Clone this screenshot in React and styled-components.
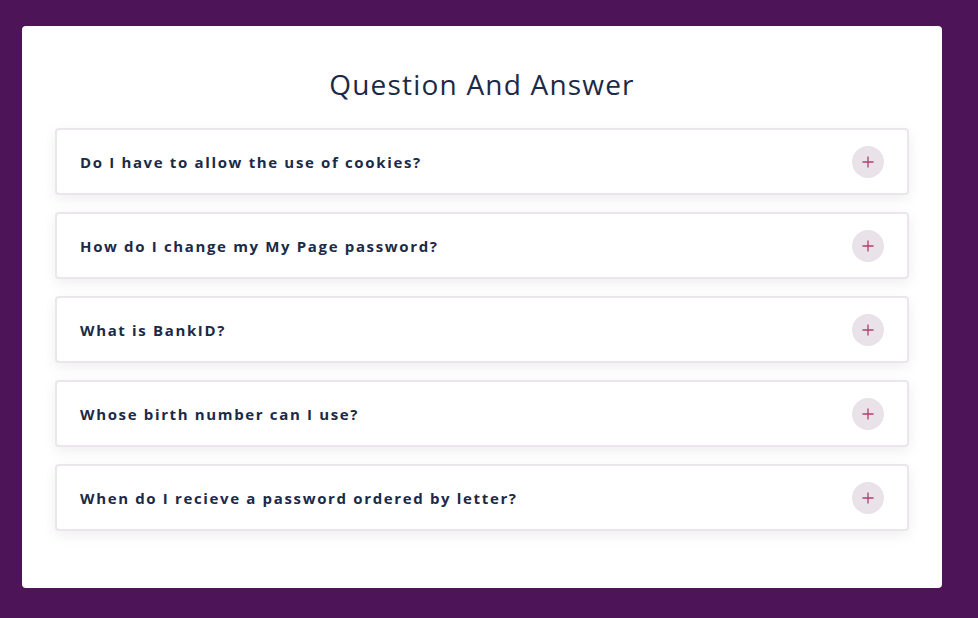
import React, { useState } from 'react';
import styled, { createGlobalStyle } from 'styled-components';

const GlobalStyle = createGlobalStyle`
  body {
    margin: 0;
    background: #4d1558;
    font-family: 'Open Sans', 'Liberation Sans', sans-serif;
  }
`;

const Page = styled.div`
  padding: 26px 36px 30px 22px;
`;

const Card = styled.div`
  background: #fff;
  border-radius: 4px;
  padding: 38px 33px 57px;
  display: flex;
  flex-direction: column;
`;

const Title = styled.h1`
  margin: 0 0 24px;
  text-align: center;
  font-size: 28px;
  line-height: 40px;
  font-weight: 500;
  letter-spacing: 1.2px;
  color: #1b2a47;
`;

const List = styled.div`
  display: flex;
  flex-direction: column;
  gap: 17px;
`;

const Item = styled.div`
  border: 2px solid #ebe6ec;
  border-radius: 4px;
  box-shadow: 0 4px 14px rgba(0, 0, 0, 0.07);
  background: #fff;
`;

const Head = styled.div`
  display: flex;
  align-items: center;
  justify-content: space-between;
  height: 63px;
  padding: 0 23px 0 23px;
  cursor: pointer;
`;

const Question = styled.span`
  font-size: 15px;
  font-weight: 700;
  letter-spacing: 1.65px;
  color: #1b2a47;
`;

const Toggle = styled.span`
  width: 32px;
  height: 32px;
  border-radius: 50%;
  background: #e9e2e9;
  display: flex;
  align-items: center;
  justify-content: center;
`;

const Answer = styled.div`
  padding: 0 23px 20px;
  font-size: 14px;
  color: #4a5568;
`;

const faqs = [
  'Do I have to allow the use of cookies?',
  'How do I change my My Page password?',
  'What is BankID?',
  'Whose birth number can I use?',
  'When do I recieve a password ordered by letter?',
];

function Plus() {
  return (
    <svg width="12" height="12" viewBox="0 0 12 12">
      <path d="M6 0.5v11M0.5 6h11" stroke="#b23f6f" strokeWidth="1.3" />
    </svg>
  );
}

export default function App() {
  const [open, setOpen] = useState(-1);
  return (
    <Page>
      <GlobalStyle />
      <Card>
        <Title>Question And Answer</Title>
        <List>
          {faqs.map((q, i) => (
            <Item key={i}>
              <Head onClick={() => setOpen(open === i ? -1 : i)}>
                <Question>{q}</Question>
                <Toggle>
                  <Plus />
                </Toggle>
              </Head>
              {open === i && <Answer>Answer goes here.</Answer>}
            </Item>
          ))}
        </List>
      </Card>
    </Page>
  );
}
